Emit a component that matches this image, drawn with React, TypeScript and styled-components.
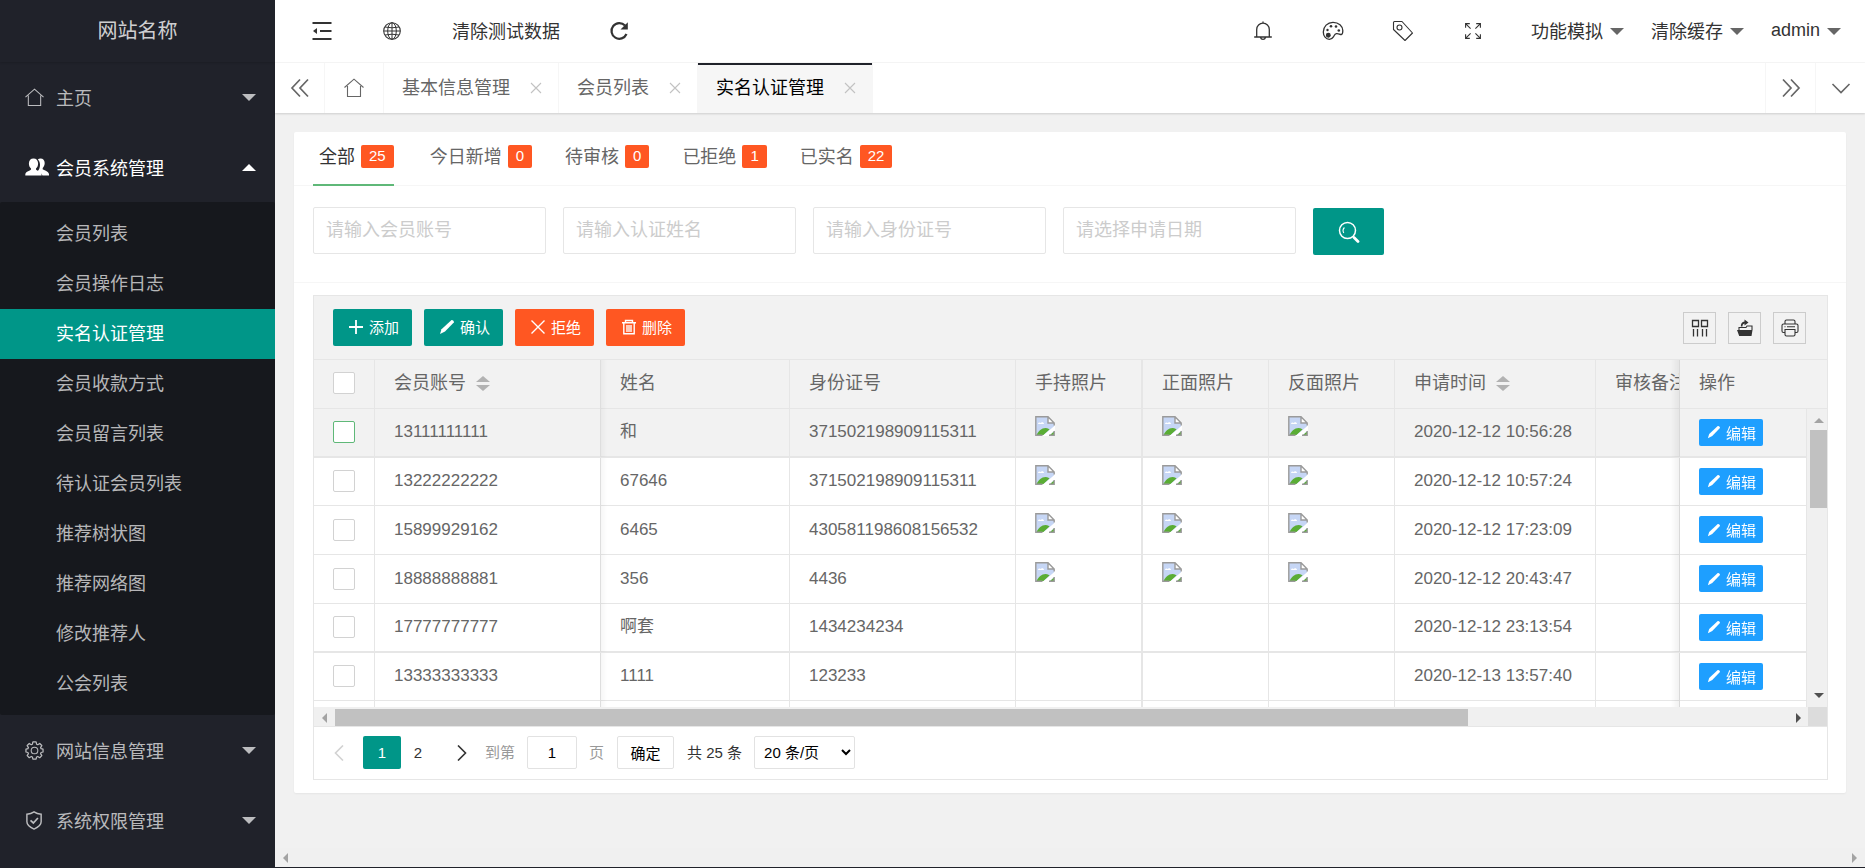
import React from "react";
import styled, { createGlobalStyle, css } from "styled-components";

const GlobalStyle = createGlobalStyle`
  *, *::before, *::after { box-sizing: border-box; }
  body {
    margin: 0;
    background: #f1f1f1;
    color: #666;
    font-family: "Liberation Sans", "Noto Sans CJK SC", sans-serif;
    font-size: 18px;
    line-height: 24px;
  }
  button, input, select { font-family: inherit; }
  a { color: inherit; text-decoration: none; }
  ul { list-style: none; margin: 0; padding: 0; }
  svg { display: block; }
`;

/* ---------- shell ---------- */

const Shell = styled.div`
  display: grid;
  grid-template-columns: 275px minmax(0, 1fr);
  min-height: 100vh;
  border-bottom: 1px solid #20222a;
`;

const Main = styled.main`
  display: flex;
  flex-direction: column;
  min-width: 0;
`;

const Svg = styled.svg<{ $size?: number }>`
  width: ${(p) => p.$size ?? 20}px;
  height: ${(p) => p.$size ?? 20}px;
  flex: none;
  fill: none;
  stroke: currentColor;
  stroke-width: 1.1;
`;

const Caret = styled.span<{ $up?: boolean }>`
  width: 0;
  height: 0;
  border: 7px solid transparent;
  ${(p) =>
    p.$up
      ? css`border-bottom-color: currentColor; border-top-width: 0;`
      : css`border-top-color: currentColor; border-bottom-width: 0;`}
`;

/* ---------- sidebar ---------- */

const Sidebar = styled.aside`
  background: #20222a;
  color: rgba(255, 255, 255, 0.7);
`;

const Logo = styled.div`
  height: 62px;
  line-height: 62px;
  text-align: center;
  font-size: 20px;
  color: rgba(255, 255, 255, 0.8);
  box-shadow: 0 1px 2px 0 rgba(0, 0, 0, 0.15);
`;

const NavGroup = styled.button<{ $open?: boolean }>`
  display: flex;
  align-items: center;
  width: 100%;
  height: 70px;
  padding: 0 19px 0 25px;
  border: 0;
  background: none;
  color: ${(p) => (p.$open ? "#fff" : "inherit")};
  font-size: 18px;
  text-align: left;
`;

const NavIcon = styled.span`
  display: flex;
  width: 31px;
`;

const NavLabel = styled.span`
  flex: 1;
`;

const SubMenu = styled.ul`
  padding: 7px 0 6px;
  background: #16181d;
  border-radius: 2px;
`;

const SubLink = styled.a<{ $active?: boolean }>`
  display: block;
  height: 50px;
  line-height: 50px;
  padding-left: 56px;
  background: ${(p) => (p.$active ? "#009688" : "transparent")};
  color: ${(p) => (p.$active ? "#fff" : "inherit")};
`;

/* ---------- top bar ---------- */

const TopBar = styled.header`
  display: flex;
  justify-content: space-between;
  height: 63px;
  padding: 0 20px 0 12px;
  background: #fff;
  border-bottom: 1px solid #f6f6f6;
  color: #333;
`;

const BarGroup = styled.div`
  display: flex;
`;

const BarButton = styled.button<{ $menu?: boolean }>`
  display: flex;
  align-items: center;
  padding: ${(p) => (p.$menu ? "0 4px 2px 23px" : "0 24px 2px 25px")};
  gap: 7px;
  border: 0;
  background: none;
  color: #333;
  font-size: 18px;
  white-space: nowrap;
`;

const IconButton = styled(BarButton)`
  width: 70px;
  padding: 0;
  justify-content: center;
`;

const MenuCaret = styled(Caret)`
  margin-top: 2px;
  color: #666;
`;

/* ---------- page tabs ---------- */

const PageTabs = styled.nav`
  display: flex;
  height: 50px;
  background: #fff;
  box-shadow: 0 1px 2px 0 rgba(0, 0, 0, 0.15);
  position: relative;
`;

const TabControl = styled.button<{ $side: "left" | "right" }>`
  display: flex;
  align-items: center;
  justify-content: center;
  width: 50px;
  padding: 0;
  border: 0;
  border-${(p) => (p.$side === "left" ? "right" : "left")}: 1px solid #f6f6f6;
  background: none;
  color: #666;
`;

const TabList = styled.div`
  display: flex;
  flex: 1;
`;

const PageTab = styled.a<{ $active?: boolean }>`
  display: flex;
  align-items: center;
  gap: 20px;
  padding: 0 16px 0 18px;
  border-right: 1px solid #f6f6f6;
  color: ${(p) => (p.$active ? "#000" : "#666")};
  background: ${(p) => (p.$active ? "#f6f6f6" : "#fff")};
  box-shadow: ${(p) => (p.$active ? "inset 0 2px #20222a" : "none")};
`;

const HomeTab = styled(PageTab)`
  padding: 0 19px;
`;

const CloseMark = styled(Svg)`
  color: #c2c2c2;
`;

/* ---------- card ---------- */

const Content = styled.div`
  flex: 1;
  padding: 19px;
`;

const Card = styled.section`
  padding-bottom: 13px;
  background: #fff;
  border-radius: 2px;
  box-shadow: 0 1px 2px 0 rgba(0, 0, 0, 0.05);
`;

const FilterTabs = styled.nav`
  display: flex;
  gap: 21px;
  height: 54px;
  padding: 0 19px;
  border-bottom: 1px solid #f6f6f6;
`;

const FilterTab = styled.a<{ $active?: boolean }>`
  display: flex;
  align-items: center;
  gap: 6px;
  height: 54px;
  padding: 0 ${(p) => (p.$active ? 0 : 6)}px 2px 6px;
  margin-right: ${(p) => (p.$active ? 9 : 0)}px;
  border-bottom: 2px solid ${(p) => (p.$active ? "#5fb878" : "transparent")};
  color: ${(p) => (p.$active ? "#333" : "#666")};
`;

const Badge = styled.span`
  height: 23px;
  margin-bottom: 2px;
  padding: 0 8px;
  border-radius: 2px;
  background: #ff5722;
  color: #fff;
  font-size: 15px;
  line-height: 22px;
`;

const SearchForm = styled.form`
  display: flex;
  gap: 17px;
  height: 97px;
  padding: 21px 19px 0;
  border-bottom: 1px solid #f6f6f6;
`;

const SearchInput = styled.input`
  width: 233px;
  height: 47px;
  padding: 0 0 0 12px;
  border: 1px solid #e6e6e6;
  border-radius: 2px;
  background: #fff;
  font-size: 18px;
  &::placeholder { color: #ccc; opacity: 1; }
`;

const SearchButton = styled.button`
  display: flex;
  align-items: center;
  justify-content: center;
  width: 71px;
  height: 47px;
  margin-top: 1px;
  border: 0;
  border-radius: 2px;
  background: #009688;
  color: #fff;
`;

/* ---------- data table ---------- */

const TableBox = styled.div`
  margin: 12px 18px 0 19px;
  border: 1px solid #e6e6e6;
`;

const Toolbar = styled.div`
  display: flex;
  align-items: center;
  justify-content: space-between;
  height: 64px;
  padding: 0 21px 0 19px;
  background: #f2f2f2;
  border-bottom: 1px solid #e6e6e6;
`;

const ToolGroup = styled.div`
  display: flex;
  gap: 12px;
`;

const ActionButton = styled.button<{ $danger?: boolean }>`
  display: flex;
  align-items: center;
  gap: 5px;
  height: 37px;
  padding: 0 13px 2px 15px;
  border: 0;
  border-radius: 2px;
  background: ${(p) => (p.$danger ? "#ff5722" : "#009688")};
  color: #fff;
  font-size: 15px;
`;

const ToolButton = styled.button`
  display: flex;
  align-items: center;
  justify-content: center;
  width: 33px;
  height: 32px;
  padding: 0;
  border: 1px solid #ccc;
  background: none;
  color: #333;
`;

const Viewport = styled.div`
  position: relative;
  height: 347px;
  overflow: hidden;
`;

const Table = styled.table`
  width: 1930px;
  table-layout: fixed;
  border-collapse: separate;
  border-spacing: 0;
  font-size: 17px;
`;

const pinned = css<{ $pin?: "left" | "edge" | "right" }>`
  ${(p) => p.$pin === "left" && css`position: sticky; left: 0; z-index: 1;`}
  ${(p) =>
    p.$pin === "edge" &&
    css`
      position: sticky;
      left: 61px;
      z-index: 1;
      &::after {
        content: "";
        position: absolute;
        top: 0;
        bottom: -1px;
        left: 100%;
        width: 7px;
        background: linear-gradient(to right, rgba(0, 0, 0, 0.04), transparent);
      }
    `}
  ${(p) =>
    p.$pin === "right" &&
    css`
      position: sticky;
      right: 0;
      z-index: 1;
      border-left: 1px solid #e6e6e6;
      border-right: 0;
      &::before {
        content: "";
        position: absolute;
        top: 0;
        bottom: -1px;
        right: 100%;
        width: 9px;
        background: linear-gradient(to left, rgba(0, 0, 0, 0.06), transparent);
      }
    `}
`;

const HeadCell = styled.th<{ $pin?: "left" | "edge" | "right" }>`
  height: 49px;
  padding: 0 0 2px 19px;
  border-right: 1px solid #e6e6e6;
  border-bottom: 1px solid #e6e6e6;
  background: #f2f2f2;
  font-size: 18px;
  font-weight: 400;
  text-align: left;
  white-space: nowrap;
  &:nth-child(5) { border-right-width: 2px; }
  ${pinned}
`;

const Cell = styled.td<{ $pin?: "left" | "edge" | "right" }>`
  padding: 0 0 1px 19px;
  border-right: 1px solid #e6e6e6;
  border-bottom: 1px solid #e6e6e6;
  background: #fff;
  white-space: nowrap;
  &:nth-child(5) { border-right-width: 2px; }
  ${pinned}
`;

const Row = styled.tr<{ $hover?: boolean }>`
  height: 49px;
  &:nth-child(4n + 2) { height: 48px; }
  &:nth-child(4n + 1) > td { border-bottom-width: 2px; }
  & > td { background: ${(p) => (p.$hover ? "#f2f2f2" : "#fff")}; }
`;

const HeadLabel = styled.span`
  display: inline-flex;
  align-items: center;
  gap: 10px;
`;

const SortMarks = styled.span`
  display: grid;
  gap: 3px;
  color: #b2b2b2;
`;

const SortMark = styled(Caret)`
  border-width: ${(p) => (p.$up ? "0 7px 6px" : "6px 7px 0")};
`;

const Check = styled.input<{ $hover?: boolean }>`
  appearance: none;
  display: block;
  width: 22px;
  height: 22px;
  margin: 0;
  border: 1px solid ${(p) => (p.$hover ? "#5fb878" : "#d2d2d2")};
  border-radius: 2px;
  background: #fff;
`;

const Photo = styled.span`
  display: block;
  height: 33px;
`;

const EditButton = styled.button`
  display: flex;
  align-items: center;
  gap: 5px;
  height: 27px;
  padding: 0 7px 0 8px;
  border: 0;
  border-radius: 2px;
  background: #1e9fff;
  color: #fff;
  font-size: 15px;
`;

const ScrollY = styled.div`
  position: absolute;
  z-index: 2;
  top: 49px;
  right: 0;
  bottom: 0;
  width: 21px;
  display: flex;
  flex-direction: column;
  align-items: center;
  padding: 9px 0 9px 3px;
  border-left: 1px solid #e6e6e6;
  background: #f0f0f0;
`;

const ThumbY = styled.div`
  width: 17px;
  height: 78px;
  margin: 7px 0 auto;
  background: #c1c1c1;
`;

const ScrollX = styled.div`
  display: flex;
  height: 20px;
  background: #f0f0f0;
  border-bottom: 1px solid #e6e6e6;
`;

const TrackX = styled.div`
  display: flex;
  align-items: center;
  flex: 1;
  padding: 2px 7px 0 8px;
`;

const ThumbX = styled.div`
  width: calc(77% - 6px);
  height: 17px;
  margin: 0 auto 0 8px;
  background: #c1c1c1;
`;

const ScrollCorner = styled.div`
  width: 19px;
  background: #dcdcdc;
`;

const ScrollArrow = styled.span<{ $dir: "up" | "down" | "left" | "right"; $on?: boolean }>`
  width: 0;
  height: 0;
  border: 5px solid transparent;
  color: ${(p) => (p.$on ? "#505050" : "#a3a3a3")};
  ${(p) => p.$dir === "up" && css`border-top-width: 0; border-bottom-color: currentColor;`}
  ${(p) => p.$dir === "down" && css`border-bottom-width: 0; border-top-color: currentColor;`}
  ${(p) => p.$dir === "left" && css`border-left-width: 0; border-right-color: currentColor;`}
  ${(p) => p.$dir === "right" && css`border-right-width: 0; border-left-color: currentColor;`}
`;

/* ---------- pager ---------- */

const Pager = styled.nav`
  display: flex;
  align-items: center;
  height: 52px;
  padding: 0 8px 1px;
  color: #333;
  font-size: 15px;
`;

const PageButton = styled.button<{ $current?: boolean }>`
  display: flex;
  align-items: center;
  justify-content: center;
  width: ${(p) => (p.$current ? 38 : 34)}px;
  height: 33px;
  padding: 0;
  border: 0;
  border-radius: 2px;
  background: ${(p) => (p.$current ? "#009688" : "none")};
  color: ${(p) => (p.$current ? "#fff" : "#333")};
  font-size: 15px;
  &:disabled { color: #d2d2d2; }
`;

const PageNumbers = styled.div`
  display: flex;
  margin: 0 10px 0 7px;
`;

const JumpLabel = styled.label`
  display: flex;
  align-items: center;
  gap: 12px;
  margin-left: 6px;
  color: #999;
`;

const JumpInput = styled.input`
  width: 50px;
  height: 33px;
  padding: 0;
  border: 1px solid #e2e2e2;
  border-radius: 2px;
  text-align: center;
  font-size: 15px;
`;

const ConfirmButton = styled.button`
  width: 57px;
  height: 33px;
  margin: 0 13px;
  padding: 0;
  border: 1px solid #e2e2e2;
  border-radius: 2px;
  background: #fff;
  color: #000;
  font-size: 15px;
`;

const SizeSelect = styled.select`
  width: 101px;
  height: 33px;
  margin-left: 12px;
  padding: 0 0 0 5px;
  border: 1px solid #e2e2e2;
  border-radius: 2px;
  background: #fff;
  color: #000;
  font-size: 15px;
`;

const FrameScroll = styled.div`
  display: flex;
  justify-content: space-between;
  align-items: center;
  height: 19px;
  padding: 0 8px;
  background: #f0f0f0;
`;

/* ---------- icons ---------- */

const HomeIcon = ({ size }: { size?: number }) => (
  <Svg viewBox="0 0 20 20" $size={size} aria-hidden>
    <path d="M.5 9.500 10 1.200l9.500 8.300M3.500 8v10.500h13V8" />
  </Svg>
);
const PeopleIcon = () => (
  <Svg viewBox="0 0 24 20" $size={24} aria-hidden>
    <path
      fill="currentColor"
      stroke="none"
      d="M15.500 1.500c2.600 0 4.200 1.800 4.200 4.500 0 2-.8 3.900-2 4.900v1.300c0 .6 6.300 2 6.300 5v1.300h-6.600c-.4-2.600-2.600-3.700-4.600-4.600 1.500-1.500 2.200-3.500 2.200-6.100 0-2.300-.8-4.200-2.200-5.300.7-.7 1.600-1 2.700-1zM8.500 1.500c2.800 0 4.600 2 4.600 4.900 0 2.100-.8 4-2.100 5v1c0 .8 5.600 2 5.600 5.100v1H.300v-1c0-3.100 5.700-4.300 5.700-5.100v-1c-1.300-1-2.100-2.900-2.100-5 0-2.900 1.800-4.900 4.600-4.900z"
    />
  </Svg>
);
const GearIcon = () => (
  <Svg viewBox="0 0 20 20" $size={19} aria-hidden>
    <circle cx="10" cy="10" r="3.500" />
    <path
      strokeWidth="1.300"
      strokeLinejoin="round"
      d="M8.300 1h3.400l.5 2.400 1.200.5 2.100-1.300 2.200 2.200-1.300 2.100.5 1.200 2.100.5v3l-2.100.5-.5 1.200 1.300 2.100-2.200 2.200-2.100-1.300-1.200.5-.5 2.200H8.300l-.5-2.200-1.200-.5-2.100 1.300-2.200-2.200 1.300-2.100-.5-1.200L1 11.600v-3l2.100-.5.5-1.200-1.300-2.100 2.200-2.200 2.100 1.300 1.200-.5z"
    />
  </Svg>
);
const ShieldIcon = () => (
  <Svg viewBox="0 0 20 20" $size={19} aria-hidden>
    <path strokeWidth="1.500" d="M9.500 1c2.400 1.600 4.600 2.200 7.500 2.400v8c0 3.800-4.200 6.200-7.500 7.600C6.200 17.600 2 15.200 2 11.400v-8C4.900 3.200 7.100 2.600 9.500 1z" />
    <path strokeWidth="1.800" d="m5.800 9.800 3 2.800 4.800-5.200" />
  </Svg>
);
const ShrinkIcon = () => (
  <Svg viewBox="0 0 20 20" aria-hidden>
    <path strokeWidth="2" d="M.500 2h19M8 10h11.500M.500 18h19" />
    <path fill="currentColor" stroke="none" d="M5 7v6L1 10z" />
  </Svg>
);
const GlobeIcon = () => (
  <Svg viewBox="0 0 20 20" aria-hidden>
    <circle cx="10" cy="10" r="8.300" />
    <ellipse cx="10" cy="10" rx="4.300" ry="8.300" strokeWidth="1" />
    <path strokeWidth="1" d="M10 1.800v16.400M1.800 10h16.400M3 6q7 1.600 14 0M3 14q7-1.600 14 0" />
  </Svg>
);
const RefreshIcon = () => (
  <Svg viewBox="0 0 20 20" aria-hidden>
    <path strokeWidth="2.200" d="M17.500 13A7.800 7.800 0 1 1 16 4.600" />
    <path fill="currentColor" stroke="none" d="M18.800 1.200V8.500h-7.300z" />
  </Svg>
);
const BellIcon = () => (
  <Svg viewBox="0 0 20 20" aria-hidden>
    <path strokeWidth="1.300" d="M3.700 16V8.500a6.300 6.300 0 0 1 12.600 0V16M1.200 16h17.600M7.500 16.500a2.600 2.600 0 0 0 5 0M10 .500v2" />
  </Svg>
);
const PaletteIcon = () => (
  <Svg viewBox="0 0 22 22" $size={22} aria-hidden>
    <path
      strokeWidth="1.300"
      d="M11 2.300c5.600 0 9.800 3.600 9.800 8.300 0 2.200-.3 3.800-1.400 3.900-1.600.1-3-1.300-5-.9-1.900.4-2 1.800-3 3.300-.9 1.500-2.300 2.400-4 2.400-3.500 0-6.100-3.200-6.100-7.300 0-5.500 4.200-9.700 9.700-9.700z"
    />
    <circle cx="6.300" cy="15.300" r="1.900" fill="currentColor" />
    <circle cx="5.500" cy="10" r="1.200" fill="currentColor" stroke="none" />
    <circle cx="9" cy="6.300" r="1.300" fill="currentColor" stroke="none" />
    <circle cx="14" cy="6.500" r="1.300" fill="currentColor" stroke="none" />
    <circle cx="16.800" cy="10.500" r="1.300" fill="currentColor" stroke="none" />
  </Svg>
);
const TagIcon = () => (
  <Svg viewBox="0 0 22 22" $size={22} aria-hidden>
    <path strokeLinejoin="round" d="M1.500 2.500Q1.500 1.500 2.500 1.500H10L20.500 13 13 20.500 1.500 9.500z" />
    <circle cx="7.500" cy="7.500" r="2.500" />
  </Svg>
);
const FullIcon = () => (
  <Svg viewBox="0 0 16 16" $size={16} aria-hidden>
    <path d="M.600 4.800V.600h4.200M11.200.600h4.200v4.200M15.400 11.200v4.200h-4.200M4.800 15.400H.600v-4.200M.800.800l4.800 4.800M15.200.800l-4.800 4.800M15.200 15.200l-4.800-4.800M.800 15.200l4.800-4.800" />
  </Svg>
);
const DoubleLeft = () => (
  <Svg viewBox="0 0 20 20" aria-hidden>
    <path strokeWidth="1.700" d="M10 1.500 2 10l8 8.500M18 1.500 10 10l8 8.500" />
  </Svg>
);
const DoubleRight = () => (
  <Svg viewBox="0 0 20 20" aria-hidden>
    <path strokeWidth="1.700" d="m2 1.500 8 8.500-8 8.500m8-17 8 8.500-8 8.500" />
  </Svg>
);
const DownIcon = () => (
  <Svg viewBox="0 0 20 20" aria-hidden>
    <path strokeWidth="1.600" d="m1.500 6 8.500 8.500L18.500 6" />
  </Svg>
);
const CloseIcon = () => (
  <CloseMark viewBox="0 0 12 12" $size={12} aria-hidden>
    <path d="m1 1 10 10M11 1 1 11" />
  </CloseMark>
);
const SearchIcon = () => (
  <Svg viewBox="0 0 22 22" $size={22} aria-hidden>
    <circle cx="9.500" cy="9.500" r="8" strokeWidth="1.500" />
    <path d="M5.800 12a4.500 4.500 0 0 1 .6-5.500" />
    <path strokeWidth="2.800" strokeLinecap="round" d="m16 16.500 4 4" />
  </Svg>
);
const PlusIcon = () => (
  <Svg viewBox="0 0 16 16" $size={16} aria-hidden>
    <path strokeWidth="1.800" d="M8 1v14M1 8h14" />
  </Svg>
);
const PencilIcon = ({ size = 16 }: { size?: number }) => (
  <Svg viewBox="0 0 16 16" $size={size} aria-hidden>
    <path fill="currentColor" stroke="none" d="M12.300 1.200c1-.6 3 1 2.500 2.300L6 12.500 1 15l1.500-4.800z" />
  </Svg>
);
const CrossIcon = () => (
  <Svg viewBox="0 0 16 16" $size={16} aria-hidden>
    <path strokeWidth="1.400" d="m1.500 1.500 13 13m0-13-13 13" />
  </Svg>
);
const TrashIcon = () => (
  <Svg viewBox="0 0 16 16" $size={16} aria-hidden>
    <path strokeWidth="1.400" d="M1 3.800h14M4.500 3.500v-2h7v2M2.800 4v10.800h10.400V4M6 6v7M8 6v7M10 6v7" />
  </Svg>
);
const ColumnsIcon = () => (
  <Svg viewBox="0 0 18 18" $size={18} aria-hidden>
    <path strokeWidth="1.300" d="M1.500 1.500h6v6h-6zM10.500 1.500h6v6h-6zM2.500 10v7.500M6.500 10v7.500M11.500 10v7.500M15.500 10v7.500" />
  </Svg>
);
const ExportIcon = () => (
  <Svg viewBox="0 0 18 18" $size={18} aria-hidden>
    <path fill="currentColor" stroke="none" d="M1 11h15.500L15.500 17H3.200zM8.500.5l4 3-4 3V4.600C7 5 6.500 6 6.500 7.500H4.800C4.800 4.400 6 2.600 8.500 2.400z" />
    <path d="M3 11V8.500h7l1-1.500h5v4" />
  </Svg>
);
const PrintIcon = () => (
  <Svg viewBox="0 0 18 18" $size={18} aria-hidden>
    <path d="M4 5V2.500Q4 1 5.500 1h7Q14 1 14 2.500V5M4 13.500H2.500Q1 13.500 1 12V6.500Q1 5 2.500 5h13Q17 5 17 6.500V12q0 1.500-1.500 1.500H14M4 10.500h10v5q0 1.500-1.500 1.500h-7Q4 17 4 15.500zM3.500 7.700h1M6 7.700h8" />
  </Svg>
);
const ChevronLeft = () => (
  <Svg viewBox="0 0 16 16" $size={16} aria-hidden>
    <path strokeWidth="1.600" d="M12 .500 4.500 8l7.500 7.500" />
  </Svg>
);
const ChevronRight = () => (
  <Svg viewBox="0 0 16 16" $size={16} aria-hidden>
    <path strokeWidth="1.600" d="M4 .500 11.500 8 4 15.500" />
  </Svg>
);
const BrokenImage = () => (
  <Svg viewBox="0 0 20 20" role="img" aria-label="照片">
    <path fill="#c6d6f5" stroke="none" d="M1 1h12l6 6v12H1z" />
    <path fill="#fff" stroke="none" d="M3 8c0-1.600 1.800-2 2.500-1C6.500 5.500 9 6 9 8zM13 1v6h6z" />
    <path fill="#5aad35" stroke="none" d="M1.500 19c2-4 5-7 9-7 2.500 0 4 1.500 4 1.500L8.500 19z" />
    <path fill="#fff" stroke="none" d="M20 9.500V14l-6 6H7.500z" />
    <path fill="#5aad35" stroke="none" d="m14.500 19.500 4.500-4v4z" />
    <path stroke="#9a9a9a" strokeWidth="1.400" d="M7.500 19.200H.800V.800H13L19.200 7v2.500M13 .800V7h6.200M14 19.200h5.200V15" />
  </Svg>
);

/* ---------- data ---------- */

const subItems = [
  "会员列表", "会员操作日志", "实名认证管理", "会员收款方式", "会员留言列表",
  "待认证会员列表", "推荐树状图", "推荐网络图", "修改推荐人", "公会列表",
];

const filters: [string, number][] = [
  ["全部", 25], ["今日新增", 0], ["待审核", 0], ["已拒绝", 1], ["已实名", 22],
];

const searchFields = ["请输入会员账号", "请输入认证姓名", "请输入身份证号", "请选择申请日期"];

type Member = { account: string; name: string; idNo: string; photos: boolean; time: string };

const members: Member[] = [
  { account: "13111111111", name: "和", idNo: "371502198909115311", photos: true, time: "2020-12-12 10:56:28" },
  { account: "13222222222", name: "67646", idNo: "371502198909115311", photos: true, time: "2020-12-12 10:57:24" },
  { account: "15899929162", name: "6465", idNo: "430581198608156532", photos: true, time: "2020-12-12 17:23:09" },
  { account: "18888888881", name: "356", idNo: "4436", photos: true, time: "2020-12-12 20:43:47" },
  { account: "17777777777", name: "啊套", idNo: "1434234234", photos: false, time: "2020-12-12 23:13:54" },
  { account: "13333333333", name: "1111", idNo: "123233", photos: false, time: "2020-12-13 13:57:40" },
];

const columnWidths = [61, 226, 189, 226, 127, 126, 126, 201];

const Sortable = ({ children }: { children: React.ReactNode }) => (
  <HeadLabel>
    {children}
    <SortMarks>
      <SortMark $up />
      <SortMark />
    </SortMarks>
  </HeadLabel>
);

const PhotoCell = ({ shown }: { shown: boolean }) => (
  <Cell>{shown && <Photo><BrokenImage /></Photo>}</Cell>
);

export default function App() {
  return (
    <>
      <GlobalStyle />
      <Shell>
        <Sidebar>
          <Logo>网站名称</Logo>
          <nav>
            <NavGroup><NavIcon><HomeIcon size={19} /></NavIcon><NavLabel>主页</NavLabel><Caret /></NavGroup>
            <NavGroup $open><NavIcon><PeopleIcon /></NavIcon><NavLabel>会员系统管理</NavLabel><Caret $up /></NavGroup>
            <SubMenu>
              {subItems.map((item) => (
                <li key={item}><SubLink href="#" $active={item === "实名认证管理"}>{item}</SubLink></li>
              ))}
            </SubMenu>
            <NavGroup><NavIcon><GearIcon /></NavIcon><NavLabel>网站信息管理</NavLabel><Caret /></NavGroup>
            <NavGroup><NavIcon><ShieldIcon /></NavIcon><NavLabel>系统权限管理</NavLabel><Caret /></NavGroup>
          </nav>
        </Sidebar>

        <Main>
          <TopBar>
            <BarGroup>
              <IconButton aria-label="侧边伸缩"><ShrinkIcon /></IconButton>
              <IconButton aria-label="前台"><GlobeIcon /></IconButton>
              <BarButton>清除测试数据</BarButton>
              <IconButton aria-label="刷新"><RefreshIcon /></IconButton>
            </BarGroup>
            <BarGroup>
              <IconButton aria-label="消息"><BellIcon /></IconButton>
              <IconButton aria-label="主题"><PaletteIcon /></IconButton>
              <IconButton aria-label="便签"><TagIcon /></IconButton>
              <IconButton aria-label="全屏"><FullIcon /></IconButton>
              <BarButton $menu>功能模拟<MenuCaret /></BarButton>
              <BarButton $menu>清除缓存<MenuCaret /></BarButton>
              <BarButton $menu>admin<MenuCaret /></BarButton>
            </BarGroup>
          </TopBar>

          <PageTabs>
            <TabControl $side="left" aria-label="向左"><DoubleLeft /></TabControl>
            <TabList>
              <HomeTab href="#" aria-label="主页"><HomeIcon /></HomeTab>
              <PageTab href="#">基本信息管理<CloseIcon /></PageTab>
              <PageTab href="#">会员列表<CloseIcon /></PageTab>
              <PageTab href="#" $active>实名认证管理<CloseIcon /></PageTab>
            </TabList>
            <TabControl $side="right" aria-label="向右"><DoubleRight /></TabControl>
            <TabControl $side="right" aria-label="更多"><DownIcon /></TabControl>
          </PageTabs>

          <Content>
            <Card>
              <FilterTabs>
                {filters.map(([label, count], i) => (
                  <FilterTab href="#" key={label} $active={i === 0}>{label}<Badge>{count}</Badge></FilterTab>
                ))}
              </FilterTabs>

              <SearchForm>
                {searchFields.map((field) => (
                  <SearchInput key={field} placeholder={field} aria-label={field} />
                ))}
                <SearchButton type="button" aria-label="搜索"><SearchIcon /></SearchButton>
              </SearchForm>

              <TableBox>
                <Toolbar>
                  <ToolGroup>
                    <ActionButton><PlusIcon />添加</ActionButton>
                    <ActionButton><PencilIcon />确认</ActionButton>
                    <ActionButton $danger><CrossIcon />拒绝</ActionButton>
                    <ActionButton $danger><TrashIcon />删除</ActionButton>
                  </ToolGroup>
                  <ToolGroup>
                    <ToolButton aria-label="筛选列"><ColumnsIcon /></ToolButton>
                    <ToolButton aria-label="导出"><ExportIcon /></ToolButton>
                    <ToolButton aria-label="打印"><PrintIcon /></ToolButton>
                  </ToolGroup>
                </Toolbar>

                <Viewport>
                  <Table>
                    <colgroup>
                      {columnWidths.map((width, i) => <col key={i} width={width} />)}
                      <col />
                      <col width={148} />
                    </colgroup>
                    <thead>
                      <tr>
                        <HeadCell $pin="left"><Check type="checkbox" aria-label="全选" /></HeadCell>
                        <HeadCell $pin="edge"><Sortable>会员账号</Sortable></HeadCell>
                        <HeadCell>姓名</HeadCell>
                        <HeadCell>身份证号</HeadCell>
                        <HeadCell>手持照片</HeadCell>
                        <HeadCell>正面照片</HeadCell>
                        <HeadCell>反面照片</HeadCell>
                        <HeadCell><Sortable>申请时间</Sortable></HeadCell>
                        <HeadCell>审核备注</HeadCell>
                        <HeadCell $pin="right">操作</HeadCell>
                      </tr>
                    </thead>
                    <tbody>
                      {members.map((m, i) => (
                        <Row key={m.account} $hover={i === 0}>
                          <Cell $pin="left"><Check type="checkbox" aria-label={m.account} $hover={i === 0} /></Cell>
                          <Cell $pin="edge">{m.account}</Cell>
                          <Cell>{m.name}</Cell>
                          <Cell>{m.idNo}</Cell>
                          <PhotoCell shown={m.photos} />
                          <PhotoCell shown={m.photos} />
                          <PhotoCell shown={m.photos} />
                          <Cell>{m.time}</Cell>
                          <Cell />
                          <Cell $pin="right"><EditButton><PencilIcon size={14} />编辑</EditButton></Cell>
                        </Row>
                      ))}
                      <Row>
                        <Cell $pin="left" /><Cell $pin="edge" /><Cell /><Cell /><Cell />
                        <Cell /><Cell /><Cell /><Cell /><Cell $pin="right" />
                      </Row>
                    </tbody>
                  </Table>
                  <ScrollY>
                    <ScrollArrow $dir="up" />
                    <ThumbY />
                    <ScrollArrow $dir="down" $on />
                  </ScrollY>
                </Viewport>
                <ScrollX>
                  <TrackX>
                    <ScrollArrow $dir="left" />
                    <ThumbX />
                    <ScrollArrow $dir="right" $on />
                  </TrackX>
                  <ScrollCorner />
                </ScrollX>

                <Pager>
                  <PageButton disabled aria-label="上一页"><ChevronLeft /></PageButton>
                  <PageNumbers>
                    <PageButton $current>1</PageButton>
                    <PageButton>2</PageButton>
                  </PageNumbers>
                  <PageButton aria-label="下一页"><ChevronRight /></PageButton>
                  <JumpLabel>到第<JumpInput defaultValue="1" />页</JumpLabel>
                  <ConfirmButton>确定</ConfirmButton>
                  <span>共 25 条</span>
                  <SizeSelect aria-label="每页条数" defaultValue="20">
                    <option value="20">20 条/页</option>
                    <option value="50">50 条/页</option>
                  </SizeSelect>
                </Pager>
              </TableBox>
            </Card>
          </Content>
          <FrameScroll>
            <ScrollArrow $dir="left" />
            <ScrollArrow $dir="right" />
          </FrameScroll>
        </Main>
      </Shell>
    </>
  );
}
